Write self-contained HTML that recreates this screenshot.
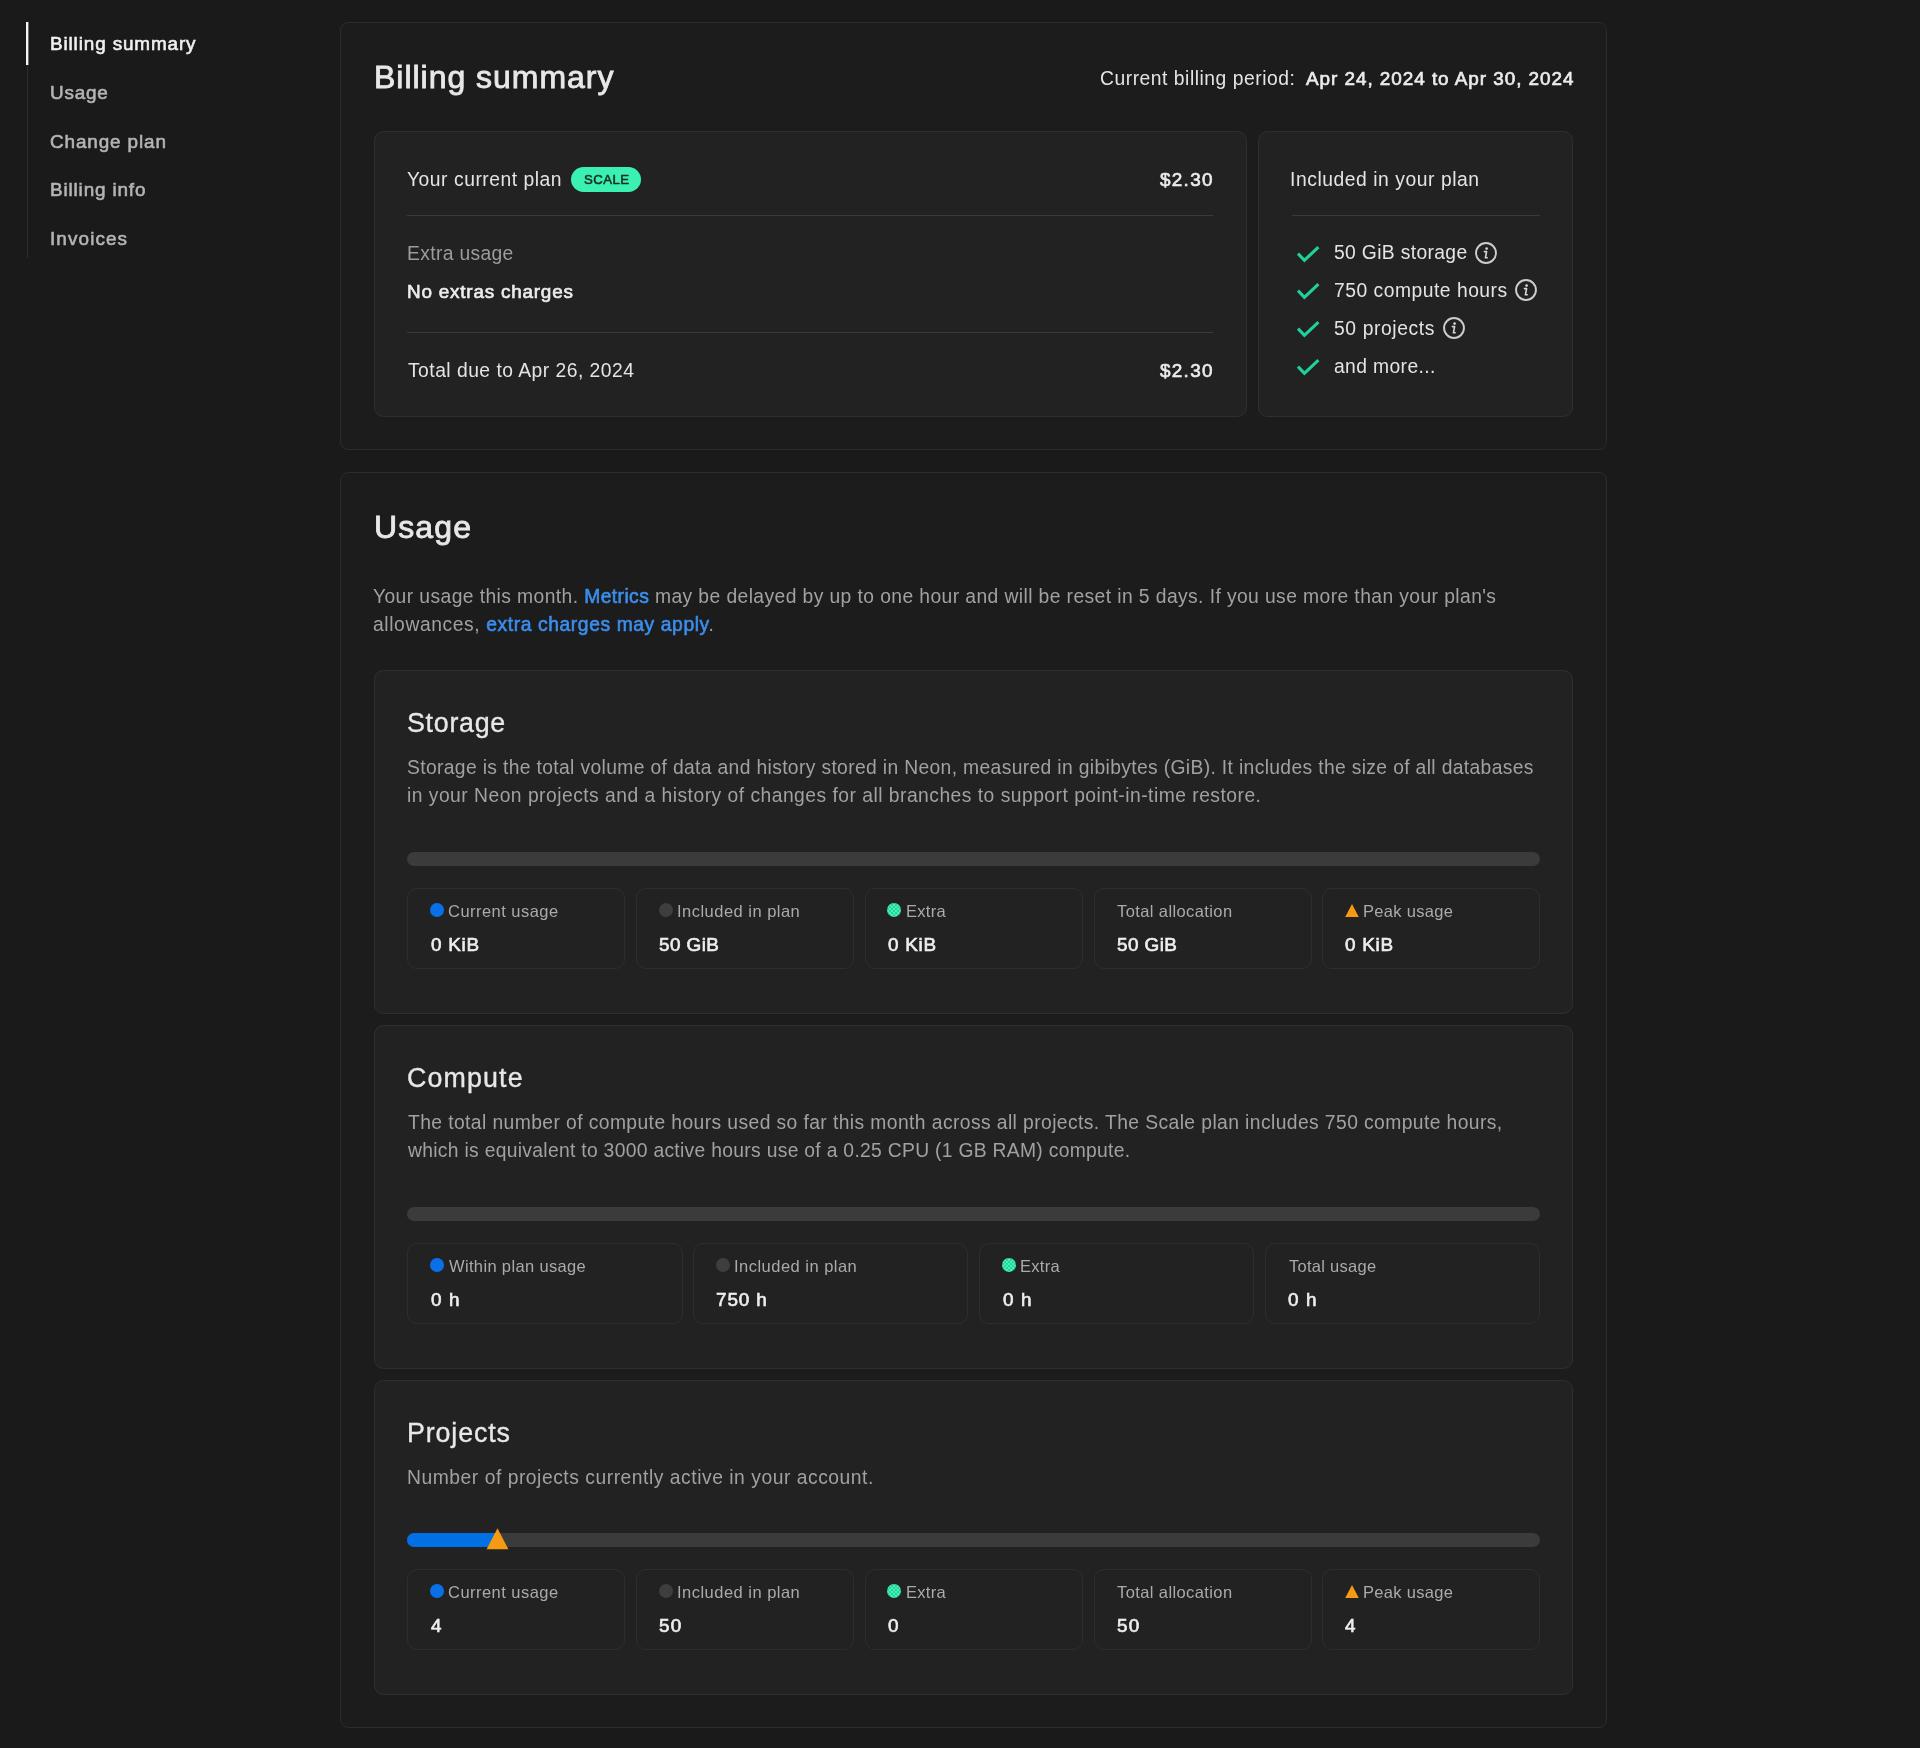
<!DOCTYPE html>
<html lang="en">
<head>
<meta charset="utf-8">
<title>Billing</title>
<style>
*{box-sizing:border-box;margin:0;padding:0}
html,body{width:1920px;height:1748px;background:#1a1a1a;overflow:hidden}
body{font-family:"Liberation Sans",Arial,sans-serif;color:#e6e6e6;position:relative;-webkit-font-smoothing:antialiased}
.abs{position:absolute}
.t{position:absolute;white-space:nowrap;line-height:1;will-change:transform}
/* sidebar */
#sline{left:27px;top:22px;width:1px;height:236px;background:#2e2e2e}
#sact{left:26px;top:22px;width:2px;height:43px;background:#f4f4f4;box-shadow:1px 0 0 rgba(244,244,244,.4)}
.nav{color:#b4b4b4;-webkit-text-stroke:0.6px #b4b4b4}
.nav.on{color:#f0f0f0;-webkit-text-stroke:0.6px #f0f0f0}
/* cards */
.card{position:absolute;border:1px solid #2c2c2c;border-radius:8px;background:#1c1c1c}
.inner{position:absolute;border:1px solid #2e2f2f;border-radius:9.5px;background:#222222}
.h1{color:#e8e8e8;-webkit-text-stroke:0.85px #e8e8e8}
.h2{color:#e8e8e8;-webkit-text-stroke:0.35px #e8e8e8}
.b{color:#e4e4e4}
.bb{color:#ececec;-webkit-text-stroke:0.65px #ececec}
.muted{color:#9c9c9c}
.p{color:#a1a1a1}
.p a{color:#3b8eee;-webkit-text-stroke:0.6px #3b8eee;text-decoration:none}
.hr{position:absolute;height:1px;background:#3a3a3a}
.badge{position:absolute;left:571px;top:167px;width:70px;height:25px;border-radius:12.5px;background:#3af1b2}
.bt{color:#1a2b25;-webkit-text-stroke:0.55px #1a2b25}
.bar{position:absolute;left:407px;width:1133px;height:14px;border-radius:7px;background:#3b3b3b;overflow:hidden}
.stat{position:absolute;height:81px;border:1px solid #2d2e2e;border-radius:10px}
.lbl{color:#aaaaaa}
.val{color:#eeeeee;-webkit-text-stroke:0.65px #eeeeee}
.dot{position:absolute;width:14px;height:14px;border-radius:50%}
.gd{background-image:repeating-linear-gradient(45deg,rgba(0,60,40,.22) 0 1px,transparent 1px 2.83px),repeating-linear-gradient(-45deg,rgba(0,60,40,.22) 0 1px,transparent 1px 2.83px)}
</style>
</head>
<body>
<nav>
<div class="abs" id="sline"></div>
<div class="abs" id="sact"></div>
<span class="t nav on" id="t0" style="left:49.8px;top:35px;font-size:18.9px;letter-spacing:0.874px">Billing summary</span>
<span class="t nav" id="t1" style="left:49.8px;top:84px;font-size:18.9px;letter-spacing:0.810px">Usage</span>
<span class="t nav" id="t2" style="left:49.8px;top:133px;font-size:18.9px;letter-spacing:0.882px">Change plan</span>
<span class="t nav" id="t3" style="left:49.8px;top:181px;font-size:18.9px;letter-spacing:0.851px">Billing info</span>
<span class="t nav" id="t4" style="left:49.8px;top:230px;font-size:18.9px;letter-spacing:1.106px">Invoices</span>
</nav>
<main>
<section>
<div class="card" style="left:340px;top:22px;width:1267px;height:428px"></div>
<span class="t h1" id="t5" style="left:373.6px;top:61px;font-size:32.0px;letter-spacing:0.977px">Billing summary</span>
<span class="t b" id="t6" style="left:1100.4px;top:69px;font-size:19.3px;letter-spacing:0.524px">Current billing period:</span>
<span class="t bb" id="t7" style="left:1306.1px;top:70px;font-size:18.9px;letter-spacing:0.960px">Apr 24, 2024 to Apr 30, 2024</span>
<div class="inner" style="left:374px;top:131px;width:873px;height:286px"></div>
<span class="t b" id="t8" style="left:407.3px;top:170px;font-size:19.3px;letter-spacing:0.529px">Your current plan</span>
<div class="badge"></div>
<span class="t bt" id="t9" style="left:584.0px;top:173px;font-size:13.2px;letter-spacing:0.450px">SCALE</span>
<span class="t bb" id="t10" style="left:1159.6px;top:171px;font-size:18.9px;letter-spacing:1.300px">$2.30</span>
<div class="hr" style="left:407px;top:215px;width:806px"></div>
<span class="t b muted" id="t11" style="left:407.3px;top:244px;font-size:19.3px;letter-spacing:0.342px">Extra usage</span>
<span class="t bb" id="t12" style="left:407.3px;top:283px;font-size:18.9px;letter-spacing:0.787px">No extras charges</span>
<div class="hr" style="left:407px;top:332px;width:806px"></div>
<span class="t b" id="t13" style="left:408.1px;top:361px;font-size:19.3px;letter-spacing:0.480px">Total due to Apr 26, 2024</span>
<span class="t bb" id="t14" style="left:1159.6px;top:362px;font-size:18.9px;letter-spacing:1.300px">$2.30</span>
<div class="inner" style="left:1258px;top:131px;width:315px;height:286px"></div>
<span class="t b" id="t15" style="left:1289.6px;top:170px;font-size:19.3px;letter-spacing:0.558px">Included in your plan</span>
<div class="hr" style="left:1292px;top:215px;width:248px"></div>
<svg class="abs" style="left:1296.0px;top:242.5px" width="24" height="20" viewBox="0 0 24 20"><path d="M2.0 10.7 L8.4 17.3 L22.4 4.1" fill="none" stroke="#1fd19a" stroke-width="3.1"/></svg>
<span class="t b" id="t16" style="left:1333.8px;top:243px;font-size:19.3px;letter-spacing:0.346px">50 GiB storage</span>
<svg class="abs" style="left:1474.0px;top:240.5px" width="24" height="24" viewBox="0 0 24 24"><circle cx="12" cy="12" r="9.95" fill="none" stroke="#cdcdcd" stroke-width="1.9"/><circle cx="12.6" cy="7.6" r="1.3" fill="#d6d6d6"/><path d="M10.4 10.6 H12.6 L11.4 16.8 H13.2" fill="none" stroke="#d6d6d6" stroke-width="1.6" stroke-linejoin="round" stroke-linecap="round"/></svg>
<svg class="abs" style="left:1296.0px;top:280.3px" width="24" height="20" viewBox="0 0 24 20"><path d="M2.0 10.7 L8.4 17.3 L22.4 4.1" fill="none" stroke="#1fd19a" stroke-width="3.1"/></svg>
<span class="t b" id="t17" style="left:1333.8px;top:281px;font-size:19.3px;letter-spacing:0.506px">750 compute hours</span>
<svg class="abs" style="left:1514.4px;top:278.3px" width="24" height="24" viewBox="0 0 24 24"><circle cx="12" cy="12" r="9.95" fill="none" stroke="#cdcdcd" stroke-width="1.9"/><circle cx="12.6" cy="7.6" r="1.3" fill="#d6d6d6"/><path d="M10.4 10.6 H12.6 L11.4 16.8 H13.2" fill="none" stroke="#d6d6d6" stroke-width="1.6" stroke-linejoin="round" stroke-linecap="round"/></svg>
<svg class="abs" style="left:1296.0px;top:318.2px" width="24" height="20" viewBox="0 0 24 20"><path d="M2.0 10.7 L8.4 17.3 L22.4 4.1" fill="none" stroke="#1fd19a" stroke-width="3.1"/></svg>
<span class="t b" id="t18" style="left:1333.8px;top:319px;font-size:19.3px;letter-spacing:0.612px">50 projects</span>
<svg class="abs" style="left:1441.5px;top:316.2px" width="24" height="24" viewBox="0 0 24 24"><circle cx="12" cy="12" r="9.95" fill="none" stroke="#cdcdcd" stroke-width="1.9"/><circle cx="12.6" cy="7.6" r="1.3" fill="#d6d6d6"/><path d="M10.4 10.6 H12.6 L11.4 16.8 H13.2" fill="none" stroke="#d6d6d6" stroke-width="1.6" stroke-linejoin="round" stroke-linecap="round"/></svg>
<svg class="abs" style="left:1296.0px;top:355.9px" width="24" height="20" viewBox="0 0 24 20"><path d="M2.0 10.7 L8.4 17.3 L22.4 4.1" fill="none" stroke="#1fd19a" stroke-width="3.1"/></svg>
<span class="t b" id="t19" style="left:1333.8px;top:357px;font-size:19.3px;letter-spacing:0.378px">and more...</span>
</section>
<section>
<div class="card" style="left:340px;top:472px;width:1267px;height:1256px"></div>
<span class="t h1" id="t20" style="left:373.6px;top:511px;font-size:32.0px;letter-spacing:1.125px">Usage</span>
<span class="t p" id="t21" style="left:373.3px;top:587px;font-size:19.3px;letter-spacing:0.406px">Your usage this month. <a>Metrics</a> may be delayed by up to one hour and will be reset in 5 days. If you use more than your plan's</span>
<span class="t p" id="t22" style="left:373.3px;top:615px;font-size:19.3px;letter-spacing:0.591px">allowances, <a>extra charges may apply</a>.</span>
<article>
<div class="inner" style="left:374px;top:670px;width:1199px;height:344px"></div>
<span class="t h2" id="t23" style="left:407.4px;top:710px;font-size:26.8px;letter-spacing:0.720px">Storage</span>
<span class="t p" id="t24" style="left:407.3px;top:758px;font-size:19.3px;letter-spacing:0.349px">Storage is the total volume of data and history stored in Neon, measured in gibibytes (GiB). It includes the size of all databases</span>
<span class="t p" id="t25" style="left:407.3px;top:786px;font-size:19.3px;letter-spacing:0.478px">in your Neon projects and a history of changes for all branches to support point-in-time restore.</span>
<div class="bar" style="top:852px"></div>
<div class="stat" style="left:407px;top:888px;width:218px"></div>
<div class="dot" style="left:429.8px;top:903px;background-color:#0a70e8"></div>
<span class="t lbl" id="t26" style="left:448.4px;top:903px;font-size:16.5px;letter-spacing:0.465px">Current usage</span>
<span class="t val" id="t27" style="left:430.6px;top:936px;font-size:18.9px;letter-spacing:0.720px">0 KiB</span>
<div class="stat" style="left:636px;top:888px;width:218px"></div>
<div class="dot" style="left:658.5px;top:903px;background-color:#3e3e3e"></div>
<span class="t lbl" id="t28" style="left:677.1px;top:903px;font-size:16.5px;letter-spacing:0.480px">Included in plan</span>
<span class="t val" id="t29" style="left:659.3px;top:936px;font-size:18.9px;letter-spacing:0.432px">50 GiB</span>
<div class="stat" style="left:865px;top:888px;width:218px"></div>
<div class="dot gd" style="left:887.3px;top:903px;background-color:#3ef6b5"></div>
<span class="t lbl" id="t30" style="left:905.8px;top:903px;font-size:16.5px;letter-spacing:0.270px">Extra</span>
<span class="t val" id="t31" style="left:888.0px;top:936px;font-size:18.9px;letter-spacing:0.720px">0 KiB</span>
<div class="stat" style="left:1094px;top:888px;width:218px"></div>
<span class="t lbl" id="t32" style="left:1117.2px;top:903px;font-size:16.5px;letter-spacing:0.396px">Total allocation</span>
<span class="t val" id="t33" style="left:1116.7px;top:936px;font-size:18.9px;letter-spacing:0.432px">50 GiB</span>
<div class="stat" style="left:1322px;top:888px;width:218px"></div>
<svg class="abs" style="left:1345.0px;top:904.0px" width="14" height="13" viewBox="0 0 14 13"><path d="M7 0.1 L13.8 12.9 H0.2 Z" fill="#f59a12"/></svg>
<span class="t lbl" id="t34" style="left:1363.3px;top:903px;font-size:16.5px;letter-spacing:0.300px">Peak usage</span>
<span class="t val" id="t35" style="left:1345.4px;top:936px;font-size:18.9px;letter-spacing:0.720px">0 KiB</span>
</article>
<article>
<div class="inner" style="left:374px;top:1025px;width:1199px;height:344px"></div>
<span class="t h2" id="t36" style="left:407.4px;top:1065px;font-size:26.8px;letter-spacing:1.140px">Compute</span>
<span class="t p" id="t37" style="left:408.1px;top:1113px;font-size:19.3px;letter-spacing:0.408px">The total number of compute hours used so far this month across all projects. The Scale plan includes 750 compute hours,</span>
<span class="t p" id="t38" style="left:408.1px;top:1141px;font-size:19.3px;letter-spacing:0.304px">which is equivalent to 3000 active hours use of a 0.25 CPU (1 GB RAM) compute.</span>
<div class="bar" style="top:1207px"></div>
<div class="stat" style="left:407px;top:1243px;width:276px"></div>
<div class="dot" style="left:429.8px;top:1258px;background-color:#0a70e8"></div>
<span class="t lbl" id="t39" style="left:449.2px;top:1258px;font-size:16.5px;letter-spacing:0.349px">Within plan usage</span>
<span class="t val" id="t40" style="left:430.6px;top:1291px;font-size:18.9px;letter-spacing:1.080px">0 h</span>
<div class="stat" style="left:693px;top:1243px;width:275px"></div>
<div class="dot" style="left:715.7px;top:1258px;background-color:#3e3e3e"></div>
<span class="t lbl" id="t41" style="left:734.1px;top:1258px;font-size:16.5px;letter-spacing:0.480px">Included in plan</span>
<span class="t val" id="t42" style="left:716.3px;top:1291px;font-size:18.9px;letter-spacing:0.900px">750 h</span>
<div class="stat" style="left:979px;top:1243px;width:275px"></div>
<div class="dot gd" style="left:1001.6px;top:1258px;background-color:#3ef6b5"></div>
<span class="t lbl" id="t43" style="left:1019.7px;top:1258px;font-size:16.5px;letter-spacing:0.270px">Extra</span>
<span class="t val" id="t44" style="left:1002.7px;top:1291px;font-size:18.9px;letter-spacing:1.080px">0 h</span>
<div class="stat" style="left:1265px;top:1243px;width:275px"></div>
<span class="t lbl" id="t45" style="left:1289.0px;top:1258px;font-size:16.5px;letter-spacing:0.270px">Total usage</span>
<span class="t val" id="t46" style="left:1288.4px;top:1291px;font-size:18.9px;letter-spacing:1.080px">0 h</span>
</article>
<article>
<div class="inner" style="left:374px;top:1380px;width:1199px;height:315px"></div>
<span class="t h2" id="t47" style="left:406.6px;top:1420px;font-size:26.8px;letter-spacing:0.874px">Projects</span>
<span class="t p" id="t48" style="left:407.3px;top:1468px;font-size:19.3px;letter-spacing:0.529px">Number of projects currently active in your account.</span>
<div class="bar" style="top:1533px"><div class="abs" style="left:0;top:0;height:14px;width:90.6px;background:#0070e4"></div></div>
<svg class="abs" style="left:486.2px;top:1528px" width="23" height="22" viewBox="0 0 23 22"><path d="M11.5 0.3 L22.4 21.3 H0.6 Z" fill="#f59a12"/></svg>
<div class="stat" style="left:407px;top:1569px;width:218px"></div>
<div class="dot" style="left:429.8px;top:1584px;background-color:#0a70e8"></div>
<span class="t lbl" id="t49" style="left:448.4px;top:1584px;font-size:16.5px;letter-spacing:0.465px">Current usage</span>
<span class="t val" id="t50" style="left:430.6px;top:1617px;font-size:18.9px">4</span>
<div class="stat" style="left:636px;top:1569px;width:218px"></div>
<div class="dot" style="left:658.5px;top:1584px;background-color:#3e3e3e"></div>
<span class="t lbl" id="t51" style="left:677.1px;top:1584px;font-size:16.5px;letter-spacing:0.480px">Included in plan</span>
<span class="t val" id="t52" style="left:659.3px;top:1617px;font-size:18.9px;letter-spacing:1.300px">50</span>
<div class="stat" style="left:865px;top:1569px;width:218px"></div>
<div class="dot gd" style="left:887.3px;top:1584px;background-color:#3ef6b5"></div>
<span class="t lbl" id="t53" style="left:905.8px;top:1584px;font-size:16.5px;letter-spacing:0.270px">Extra</span>
<span class="t val" id="t54" style="left:888.0px;top:1617px;font-size:18.9px">0</span>
<div class="stat" style="left:1094px;top:1569px;width:218px"></div>
<span class="t lbl" id="t55" style="left:1117.2px;top:1584px;font-size:16.5px;letter-spacing:0.396px">Total allocation</span>
<span class="t val" id="t56" style="left:1116.7px;top:1617px;font-size:18.9px;letter-spacing:1.300px">50</span>
<div class="stat" style="left:1322px;top:1569px;width:218px"></div>
<svg class="abs" style="left:1345.0px;top:1585.0px" width="14" height="13" viewBox="0 0 14 13"><path d="M7 0.1 L13.8 12.9 H0.2 Z" fill="#f59a12"/></svg>
<span class="t lbl" id="t57" style="left:1363.3px;top:1584px;font-size:16.5px;letter-spacing:0.300px">Peak usage</span>
<span class="t val" id="t58" style="left:1345.4px;top:1617px;font-size:18.9px">4</span>
</article>
</section>
</main>

</body>
</html>
